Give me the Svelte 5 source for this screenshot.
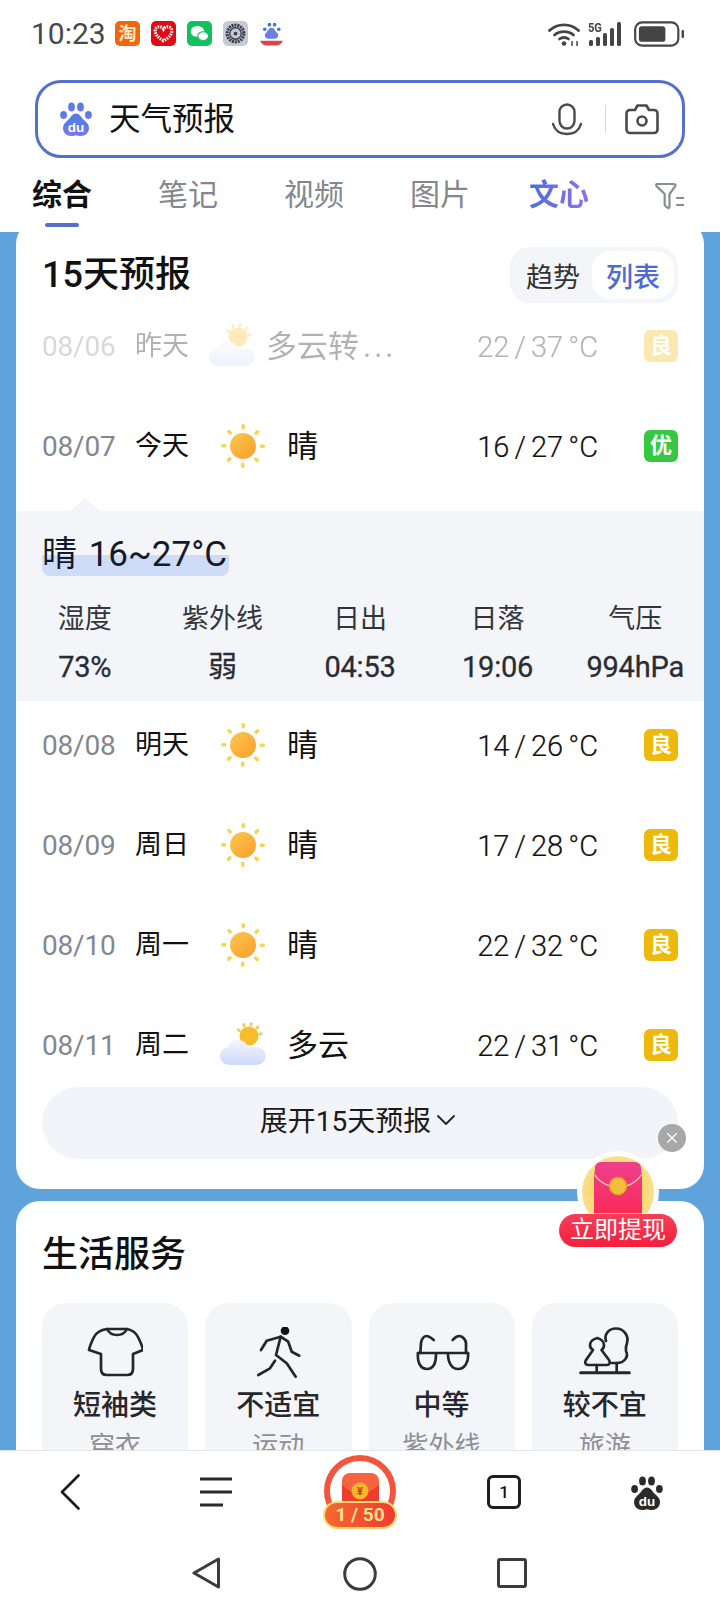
<script>
	const appIcons = ['taobao', 'heart', 'wechat', 'gear', 'du'];
	const tabs = [
		{ label: '综合', active: true },
		{ label: '笔记' },
		{ label: '视频' },
		{ label: '图片' },
		{ label: '文心', ai: true }
	];
	const topRows = [
		{ date: '08/06', day: '昨天', icon: 'cloud', text: '多云转', temp: '22 / 37', aq: '良', past: true },
		{ date: '08/07', day: '今天', icon: 'sun', text: '晴', temp: '16 / 27', aq: '优', good: true }
	];
	const restRows = [
		{ date: '08/08', day: '明天', icon: 'sun', text: '晴', temp: '14 / 26', aq: '良' },
		{ date: '08/09', day: '周日', icon: 'sun', text: '晴', temp: '17 / 28', aq: '良' },
		{ date: '08/10', day: '周一', icon: 'sun', text: '晴', temp: '22 / 32', aq: '良' },
		{ date: '08/11', day: '周二', icon: 'cloud', text: '多云', temp: '22 / 31', aq: '良' }
	];
	const stats = [
		{ label: '湿度', value: '73%' },
		{ label: '紫外线', value: '弱' },
		{ label: '日出', value: '04:53' },
		{ label: '日落', value: '19:06' },
		{ label: '气压', value: '994hPa' }
	];
	const services = [
		{ icon: 'shirt', value: '短袖类', label: '穿衣' },
		{ icon: 'walk', value: '不适宜', label: '运动' },
		{ icon: 'glasses', value: '中等', label: '紫外线' },
		{ icon: 'tree', value: '较不宜', label: '旅游' }
	];
	const rays = [0, 45, 90, 135, 180, 225, 270, 315];
</script>

{#snippet paw(fill, inner)}
	<svg class="paw" viewBox="0 0 32 34">
		<defs>
			<linearGradient id="pawfill" x1="0" y1="0" x2="0" y2="1">
				<stop offset="0" stop-color="#4f7fe6" />
				<stop offset="0.55" stop-color="#5c7be8" />
				<stop offset="1" stop-color="#8272ea" />
			</linearGradient>
		</defs>
		<ellipse cx="3.6" cy="13" rx="3.4" ry="4" fill={fill} />
		<ellipse cx="11.5" cy="5" rx="3.4" ry="4.6" fill={fill} />
		<ellipse cx="20.5" cy="5" rx="3.4" ry="4.6" fill={fill} />
		<ellipse cx="28.4" cy="13" rx="3.4" ry="4" fill={fill} />
		<path d="M16 11.500c4 0 5 4 8 6.500 3 2.500 5 5 5 8 0 5-4 8-8 8-2 0-4-.8-5-.8s-3 .8-5 .8c-4 0-8-3-8-8 0-3 2-5.500 5-8 3-2.500 4-6.500 8-6.500z" fill={fill} />
		<text x="16" y="29.500" text-anchor="middle" font-size="13.500" font-weight="700" fill={inner}>du</text>
	</svg>
{/snippet}

{#snippet weather(kind)}
	<svg class="weather" viewBox="0 0 46 46">
		<defs>
			<linearGradient id="sunfill" x1="0" y1="0" x2="1" y2="1">
				<stop offset="0" stop-color="#fbc94f" />
				<stop offset="1" stop-color="#fb9c2c" />
			</linearGradient>
			<linearGradient id="cloudfill" x1="0" y1="0" x2="0" y2="1">
				<stop offset="0" stop-color="#f3f4fb" />
				<stop offset="1" stop-color="#c9d5fb" />
			</linearGradient>
		</defs>
		{#if kind === 'sun'}
			{#each rays as r}
				<rect x="21.500" y="1" width="3.500" height="5.500" rx="1.700" fill="#f5d64e" transform="rotate({r} 23 23)" />
			{/each}
			<circle cx="23" cy="23" r="13" fill="url(#sunfill)" />
		{:else}
			{#each [-60, -25, 10, 45, 80] as r}
				<rect x="27.500" y="0" width="3" height="4.500" rx="1.500" fill="#f0d05a" transform="rotate({r} 29 14)" />
			{/each}
			<circle cx="29" cy="14" r="9.500" fill="#f9bd2b" />
			<path d="M10 43C4 43 0 39 0 34c0-5 3.500-8.500 8-9 2-5 7-8 12-7 4 .7 7 3.500 8.500 7.500 1-.3 2-.5 3.500-.5h4c5.500 0 9.500 3.500 9.500 9s-4 9-9.500 9z" fill="url(#cloudfill)" opacity="0.92" />
		{/if}
	</svg>
{/snippet}

{#snippet row(r)}
	<div class="row" class:past={r.past}>
		<span class="date">{r.date}</span>
		<span class="day">{r.day}</span>
		{@render weather(r.icon)}
		<span class="desc">{r.text}{#if r.past}<b class="dots">...</b>{/if}</span>
		<span class="temp">{r.temp}<i>°C</i></span>
		<span class="aq" class:good={r.good}>{r.aq}</span>
	</div>
{/snippet}

<div class="page">
	<header class="top">
		<div class="status">
			<span class="clock">10:23</span>
			<div class="apps">
				{#each appIcons as a}
					<span class="app {a}">
						{#if a === 'taobao'}
							淘
						{:else if a === 'heart'}
							<svg viewBox="0 0 24 24"><path d="M12 19C6 15.500 4 12.500 4 9.500 4 7 6 5.500 8 5.500c1.700 0 3.200.8 4 2.200.8-1.400 2.300-2.200 4-2.200 2 0 4 1.500 4 4 0 3-2 6-8 9.500z" fill="none" stroke="#fff" stroke-width="3" stroke-dasharray="1.500 1" /></svg>
						{:else if a === 'wechat'}
							<svg viewBox="0 0 24 24"><ellipse cx="10" cy="10" rx="6.500" ry="5.200" fill="#fff" /><ellipse cx="15.500" cy="14.500" rx="5.200" ry="4.200" fill="#fff" stroke="#11c15e" /></svg>
						{:else if a === 'gear'}
							<svg viewBox="0 0 24 24"><circle cx="12" cy="12" r="8" fill="none" stroke="#3c3f4a" stroke-width="3" stroke-dasharray="2 .8" /><circle cx="12" cy="12" r="5.500" fill="none" stroke="#3c3f4a" stroke-width="1.300" /><circle cx="12" cy="12" r="1.800" fill="#3c3f4a" /></svg>
						{:else}
							<svg viewBox="0 0 24 24">
								<circle cx="5.500" cy="8" r="1.700" fill="#3f78d8" /><circle cx="10" cy="3.500" r="1.800" fill="#3f78d8" /><circle cx="15" cy="3.500" r="1.800" fill="#3f78d8" /><circle cx="19" cy="8" r="1.700" fill="#3f78d8" />
								<path d="M12 6.500c3 0 3 3 5 4.500 2.500 2 1.500 6-2 6H9c-3.500 0-4.500-4-2-6 2-1.500 2-4.500 5-4.500z" fill="#6a7fe6" />
								<path d="M1 19h22c-1.500 3-3.500 4.500-6 4.500H7C4.500 23.500 2.500 22 1 19z" fill="#d8474a" />
							</svg>
						{/if}
					</span>
				{/each}
			</div>
			<div class="indicators">
				<svg class="wifi" viewBox="0 0 32 24" fill="none" stroke="#444" stroke-width="2.800" stroke-linecap="round">
					<path d="M1.500 8.500C9.500 1 22.500 1 30.500 8.500" />
					<path d="M6.500 13c5-4.500 14-4.500 19 0" />
					<path d="M11.500 17c2.500-2 6.500-2 9 0" />
					<circle cx="16" cy="21.500" r="2.300" fill="#444" stroke="none" />
					<path d="M24 19.500v4M29 19.500v4" stroke-width="1.500" />
				</svg>
				<div class="cell">
					<span class="five">5G</span>
					<svg viewBox="0 0 35 24" fill="#444">
						<rect x="0" y="18" width="4" height="6" rx="1.500" />
						<rect x="7" y="15" width="4" height="9" rx="1.500" />
						<rect x="14" y="11" width="4" height="13" rx="1.500" />
						<rect x="21" y="6" width="4" height="18" rx="1.500" />
						<rect x="28" y="0" width="4" height="24" rx="1.500" />
					</svg>
				</div>
				<svg class="battery" viewBox="0 0 52 26">
					<rect x="1.200" y="1.200" width="44" height="23.600" rx="7" fill="none" stroke="#444" stroke-width="2.200" />
					<rect x="5" y="5" width="27" height="16" rx="3" fill="#444" />
					<rect x="48.500" y="9" width="2.500" height="8" rx="1" fill="#444" />
				</svg>
			</div>
		</div>

		<div class="search">
			{@render paw('url(#pawfill)', '#fff')}
			<span class="query">天气预报</span>
			<div class="search-tools">
				<svg class="mic" viewBox="0 0 30 33" fill="none" stroke="#4a4a4a" stroke-width="2.400" stroke-linecap="round">
					<rect x="7.500" y="1.500" width="15" height="24" rx="7.500" />
					<path d="M1 21c2 6.500 7.500 10 14 10s12-3.500 14-10" />
				</svg>
				<span class="divider"></span>
				<svg class="camera" viewBox="0 0 34 31" fill="none" stroke="#4a4a4a" stroke-width="2.600" stroke-linejoin="round">
					<path d="M5 6h5l2.500-4.500h9L24 6h5c2 0 3.500 1.500 3.500 3.500v16c0 2-1.500 3.500-3.500 3.500H5c-2 0-3.500-1.500-3.500-3.500v-16C1.500 7.500 3 6 5 6z" />
					<circle cx="17" cy="17" r="4.500" />
				</svg>
			</div>
		</div>

		<nav class="tabs">
			{#each tabs as t}
				<div class="tab" class:active={t.active} class:ai={t.ai}>
					<span>{t.label}</span>
					<i></i>
				</div>
			{/each}
			<svg class="filter" viewBox="0 0 32 28" fill="none" stroke="#888b92" stroke-width="2.200" stroke-linejoin="round" stroke-linecap="round">
				<path d="M2 2h17c1.500 0 2 1.500 1 2.600L14.500 12v12.500c0 1.500-1 2-2 1.200l-2-1.700c-.6-.5-.8-1-.8-1.800V12L2 4.600C1 3.500.8 2 2 2z" />
				<path d="M22 16h10M22 23h10" />
			</svg>
		</nav>
	</header>

	<main class="scroll">
		<section class="card forecast">
			<div class="card-head">
				<h2>15天预报</h2>
				<div class="toggle">
					<span>趋势</span>
					<span class="on">列表</span>
				</div>
			</div>

			<div class="rows">
				{#each topRows as r}
					{@render row(r)}
				{/each}
			</div>

			<div class="today">
				<span class="notch"></span>
				<div class="today-title"><span>晴 16~27°C</span></div>
				<div class="stats">
					{#each stats as s}
						<div class="stat">
							<span class="stat-label">{s.label}</span>
							<span class="stat-value">{s.value}</span>
						</div>
					{/each}
				</div>
			</div>

			<div class="rows">
				{#each restRows as r}
					{@render row(r)}
				{/each}
			</div>

			<button class="expand">
				展开15天预报
				<svg viewBox="0 0 20 12" fill="none" stroke="#222" stroke-width="1.800" stroke-linecap="round" stroke-linejoin="round"><path d="M2 2l8 8 8-8" /></svg>
			</button>
		</section>

		<section class="card life">
			<h2>生活服务</h2>
			<div class="tiles">
				{#each services as s}
					<div class="tile">
						<svg class="tile-icon" viewBox="0 0 56 52" fill="none" stroke="#26262a" stroke-width="2.700" stroke-linecap="round" stroke-linejoin="round">
							{#if s.icon === 'shirt'}
								<path d="M20 2C13 3 9 6 7 10 5 14 3 18 2 23l12 4v15c0 4 2 6 6 6h20c4 0 6-2 6-6V27l10-4c-1-5-3-9-5-13-2-4-6-7-11-8-2 4-6 6-10 6s-8-2-10-6z" />
								<path d="M20 2h20" />
							{:else if s.icon === 'walk'}
								<circle cx="35" cy="3.700" r="4.300" fill="#111" stroke="none" />
								<path d="M11 23l5.700-9.300 14-4 7.500 5 3.500 10 7.600 4" />
								<path d="M30.700 9.700L26 28l10.700 8.300 9 13.400" />
								<path d="M25 33.700l-5 7.600-11.700 6.700" />
							{:else if s.icon === 'glasses'}
								<path d="M4 26h50" />
								<path d="M4 26c-1 10 3 16 9 16s9-6 9-15" />
								<path d="M34 27c0 9 4 15 10 15s11-6 10-16" />
								<path d="M6.300 26L7 16c.5-4 3-7 5-7 3 0 5 1.500 7.700 4" />
								<path d="M52 26l0-10c-.5-4-4-7-6.700-7-3 0-4.500 1.500-6.600 4" />
							{:else}
								<path d="M3.700 45.700h48.600" stroke-width="3" />
								<path d="M20.300 11c3.700 1 6.700 4 6.700 7 0 2-1 4-2.500 5l7.500 10c2 3 0 5-2 5H11c-2 0-4-2-2-5l7-10c-2-1-3-3-3-5 0-3 3-6 7.300-7z" />
								<path d="M19.700 38v7.700M39.700 36v9.700" />
								<path d="M29 14c-2-6 2-12.500 10-12.500S52 9 50 16c-1.500 4-1.500 5-1 8 3 6-2 12-9 12h-5" />
							{/if}
						</svg>
						<span class="tile-value">{s.value}</span>
						<span class="tile-label">{s.label}</span>
					</div>
				{/each}
			</div>
		</section>

		<span class="float-close">
			<svg viewBox="0 0 14 14" stroke="#fff" stroke-width="1.500" stroke-linecap="round"><path d="M2 2l10 10M12 2L2 12" /></svg>
		</span>
		<div class="float-packet">
			<div class="packet-disc">
				<svg viewBox="0 0 52 60">
					<defs>
						<linearGradient id="envfill" x1="0" y1="0" x2="0" y2="1">
							<stop offset="0" stop-color="#ee3f8d" />
							<stop offset="1" stop-color="#fb2750" />
						</linearGradient>
					</defs>
					<path d="M3 6C3 2 6 0 10 0h32c4 0 7 2 7 6l1 10v44H2V16z" fill="url(#envfill)" />
					<path d="M3 13c4 7 13 12 23 12s19-5 23-12" fill="none" stroke="#f9c9a0" stroke-width="1.500" />
					<circle cx="26" cy="24" r="8.500" fill="#f4bf3f" stroke="#e8a429" stroke-width="1.500" />
				</svg>
			</div>
			<span class="packet-label">立即提现</span>
		</div>
	</main>

	<footer class="bottom">
		<div class="toolbar">
			<svg class="tool-back" viewBox="0 0 20 36" fill="none" stroke="#1a1a1a" stroke-width="2.600" stroke-linecap="round" stroke-linejoin="round"><path d="M18.500 1.500L2 18l16.500 16.500" /></svg>
			<svg class="tool-menu" viewBox="0 0 32 30" stroke="#2a2a2a" stroke-width="3"><path d="M0 2h32M0 15h32M0 28h23" /></svg>
			<div class="reward">
				<svg viewBox="0 0 74 76">
					<circle cx="37" cy="36" r="33" fill="none" stroke="#f2543c" stroke-width="6" />
					<rect x="19" y="18" width="37" height="40" rx="8" fill="#f7623f" />
					<path d="M19 30c6 5 12 9 18.500 9S50 35 56 30v26H19z" fill="#ef3d2b" />
					<circle cx="37" cy="36" r="8.500" fill="#f8b62d" />
					<text x="37" y="40" text-anchor="middle" font-size="11" font-weight="700" fill="#c23a1a">¥</text>
				</svg>
				<span class="reward-count">1 / 50</span>
			</div>
			<span class="tool-tabs">1</span>
			<span class="tool-paw">{@render paw('#2a2a2a', '#fff')}</span>
		</div>
		<div class="navbar">
			<svg class="nav-back" viewBox="0 0 28 32" fill="none" stroke="#3b3b3b" stroke-width="3" stroke-linejoin="round"><path d="M26.500 2v28L2 16z" /></svg>
			<svg class="nav-home" viewBox="0 0 34 34" fill="none" stroke="#3b3b3b" stroke-width="3"><circle cx="17" cy="17" r="15.300" /></svg>
			<svg class="nav-recent" viewBox="0 0 30 30" fill="none" stroke="#3b3b3b" stroke-width="3" stroke-linejoin="round"><rect x="1.500" y="1.500" width="27" height="27" rx="1.500" /></svg>
		</div>
	</footer>
</div>

<style>
	:global(body) {
		margin: 0;
		background: #fff;
	}
	.page {
		position: relative;
		display: flex;
		flex-direction: column;
		width: 720px;
		height: 1612px;
		overflow: hidden;
		background: #5fa3dd;
		color: #111;
		font-family: Roboto, 'Noto Sans CJK SC', sans-serif;
	}
	.top {
		position: relative;
		z-index: 2;
		height: 232px;
		flex: none;
		background: #fff;
	}
	.status {
		display: flex;
		align-items: center;
		height: 80px;
		padding: 0 35px 13px 31px;
		box-sizing: border-box;
	}
	.clock {
		width: 84px;
		font-size: 30px;
		color: #484848;
	}
	.apps {
		display: flex;
		gap: 11px;
	}
	.app {
		display: flex;
		align-items: center;
		justify-content: center;
		width: 25px;
		height: 25px;
		border-radius: 5px;
		overflow: hidden;
		font-size: 18px;
		line-height: 1;
		font-weight: 700;
		color: #ffe9c7;
	}
	.app svg {
		width: 100%;
		height: 100%;
	}
	.taobao {
		background: #f4640c;
	}
	.heart {
		background: #e00a17;
	}
	.wechat {
		background: #11c15e;
	}
	.gear {
		background: #c5c9d8;
	}
	.indicators {
		display: flex;
		align-items: center;
		margin-left: auto;
	}
	.wifi {
		width: 32px;
		height: 24px;
	}
	.cell {
		position: relative;
		width: 35px;
		height: 24px;
		margin: 0 10px 0 9px;
	}
	.cell svg {
		display: block;
		width: 100%;
		height: 100%;
	}
	.five {
		position: absolute;
		left: -1px;
		top: -1px;
		font-size: 13px;
		line-height: 13px;
		font-weight: 700;
		color: #444;
		transform: scaleX(0.85);
		transform-origin: left;
	}
	.battery {
		width: 51px;
		height: 26px;
	}
	.search {
		display: flex;
		align-items: center;
		height: 78px;
		margin: 0 35px;
		padding: 0 23px 0 22px;
		box-sizing: border-box;
		border: 3px solid #5470c9;
		border-radius: 26px;
	}
	.paw {
		display: block;
		width: 32px;
		height: 34px;
		font-family: 'Liberation Sans', sans-serif;
	}
	.query {
		margin-left: 17px;
		padding-top: 2px;
		font-size: 31.5px;
		line-height: 40px;
	}
	.search-tools {
		display: flex;
		align-items: center;
		margin-left: auto;
	}
	.mic {
		width: 30px;
		height: 33px;
	}
	.divider {
		width: 1px;
		height: 28px;
		margin: 0 19px 0 23px;
		background: #d9d9d9;
	}
	.camera {
		width: 34px;
		height: 31px;
	}
	.tabs {
		display: flex;
		align-items: flex-start;
		gap: 66px;
		padding: 17px 0 0 32px;
	}
	.tab {
		display: flex;
		flex-direction: column;
		align-items: center;
		font-size: 30px;
		line-height: 40px;
		color: #85878e;
	}
	.tab i {
		width: 34px;
		height: 4px;
		margin-top: 8px;
		border-radius: 2px;
	}
	.tab.active {
		color: #111;
		font-weight: 700;
	}
	.tab.active i {
		background: #5470c9;
	}
	.tab.ai {
		margin-left: -7px;
		font-weight: 700;
	}
	.tab.ai span {
		background: linear-gradient(90deg, #4a6ee0, #8f72ea);
		-webkit-background-clip: text;
		background-clip: text;
		color: transparent;
	}
	.filter {
		position: absolute;
		left: 655px;
		top: 182px;
		width: 32px;
		height: 28px;
		clip-path: inset(0 3px 0 0);
	}
	.scroll {
		position: relative;
		flex: 1;
		min-height: 0;
		overflow: hidden;
		padding: 0 16px;
	}
	.card {
		background: #fff;
		border-radius: 24px;
		padding: 0 26px;
	}
	.forecast {
		margin-top: -12px;
		padding-top: 27px;
		padding-bottom: 30px;
	}
	.card-head {
		display: flex;
		align-items: center;
		justify-content: space-between;
		margin-bottom: 1px;
	}
	h2 {
		margin: 0;
		font-size: 36px;
		line-height: 46px;
		font-weight: 500;
	}
	.toggle {
		display: flex;
		align-items: center;
		height: 56px;
		padding: 0 4px 0 16px;
		box-sizing: border-box;
		border-radius: 20px;
		background: #f3f5f9;
		font-size: 27px;
		color: #333;
		gap: 12px;
	}
	.toggle .on {
		display: flex;
		align-items: center;
		justify-content: center;
		width: 82px;
		height: 48px;
		border-radius: 18px;
		background: #fff;
		color: #4d6bd3;
		font-weight: 500;
	}
	.rows {
		display: flex;
		flex-direction: column;
		gap: 16px;
	}
	.row {
		display: flex;
		align-items: center;
		height: 84px;
		font-size: 27px;
	}
	.row.past {
		opacity: 0.32;
	}
	.date {
		width: 93px;
		flex: none;
		font-size: 28px;
		letter-spacing: -0.2px;
		color: #85878e;
	}
	.day {
		width: 74px;
		flex: none;
		margin-bottom: 6px;
	}
	.weather {
		display: block;
		width: 46px;
		height: 46px;
		flex: none;
		margin-left: 11px;
	}
	.past .weather {
		margin-left: 0;
	}
	.desc {
		margin-left: 21px;
		margin-bottom: 6px;
		font-size: 31px;
	}
	.past .desc {
		margin-left: 11px;
	}
	.dots {
		margin-left: 4px;
		font-weight: 400;
		letter-spacing: 3px;
	}
	.temp {
		margin-left: auto;
		margin-right: 46px;
		padding-top: 1px;
		font-size: 29px;
		font-weight: 300;
		word-spacing: -2px;
		-webkit-text-stroke: 0.2px currentColor;
	}
	.temp i {
		margin-left: 5px;
		font-style: normal;
	}
	.aq {
		display: flex;
		align-items: center;
		justify-content: center;
		width: 34px;
		height: 32px;
		border-radius: 6px;
		background: #edb90c;
		color: #fff;
		font-size: 22px;
		font-weight: 700;
		line-height: 1;
	}
	.aq.good {
		background: #36c93f;
	}
	.today {
		position: relative;
		margin: 23px -26px 2px;
		height: 190px;
		box-sizing: border-box;
		padding: 23px 0 0;
		background: #f4f5f9;
	}
	.notch {
		position: absolute;
		left: 54px;
		top: -13px;
		width: 0;
		height: 0;
		border-left: 15px solid transparent;
		border-right: 15px solid transparent;
		border-bottom: 13px solid #f4f5f9;
	}
	.today-title {
		margin-left: 26px;
		font-size: 35px;
		line-height: 42px;
		word-spacing: 3px;
		color: #15192b;
	}
	.today-title span {
		display: inline-block;
		padding-right: 2px;
		background: linear-gradient(#0000 0 50%, #cfdcf7 50%);
		border-radius: 0 0 8px 8px;
	}
	.stats {
		display: grid;
		grid-template-columns: repeat(5, 1fr);
		margin-top: 24px;
	}
	.stat {
		display: flex;
		flex-direction: column;
		align-items: center;
		color: #2a2c33;
	}
	.stat-label {
		font-size: 27px;
		line-height: 38px;
		color: #33353c;
	}
	.stat-value {
		margin-top: 10px;
		font-size: 29px;
		line-height: 38px;
		letter-spacing: -0.2px;
		-webkit-text-stroke: 0.3px currentColor;
	}
	.expand {
		display: flex;
		align-items: center;
		justify-content: center;
		gap: 5px;
		width: 100%;
		height: 72px;
		padding: 0 4px 9px 0;
		border: 0;
		border-radius: 36px;
		background: #f3f4f9;
		color: #1a1a1a;
		font: inherit;
		font-size: 28px;
	}
	.expand svg {
		width: 20px;
		height: 12px;
		margin-top: 3px;
	}
	.life {
		margin-top: 12px;
		padding-top: 31px;
	}
	.tiles {
		display: grid;
		grid-template-columns: repeat(4, 1fr);
		gap: 17px;
		margin-top: 25px;
	}
	.tile {
		display: flex;
		flex-direction: column;
		align-items: center;
		padding-top: 24px;
		height: 200px;
		box-sizing: border-box;
		border-radius: 24px;
		background: #f4f5f9;
	}
	.tile-icon {
		width: 56px;
		height: 52px;
	}
	.tile-value {
		margin-top: 9px;
		font-size: 28px;
		line-height: 36px;
		font-weight: 500;
		color: #26272c;
	}
	.tile-label {
		margin-top: 4px;
		font-size: 26px;
		line-height: 36px;
		color: #8d8f96;
	}
	.float-close {
		position: absolute;
		left: 658px;
		top: 892px;
		display: flex;
		align-items: center;
		justify-content: center;
		width: 28px;
		height: 28px;
		border-radius: 50%;
		background: #a8a8a8;
	}
	.float-close svg {
		width: 12px;
		height: 12px;
	}
	.float-packet {
		position: absolute;
		left: 559px;
		top: 919px;
		width: 118px;
		height: 96px;
	}
	.packet-disc {
		position: absolute;
		left: 18px;
		top: 0;
		width: 82px;
		height: 82px;
		box-sizing: border-box;
		border: 5px solid #fff;
		border-radius: 50%;
		background: radial-gradient(circle, #f8d468 40%, #fcecb0 100%);
		overflow: hidden;
		display: flex;
		justify-content: center;
		padding-top: 6px;
	}
	.packet-disc svg {
		flex: none;
		width: 52px;
		height: 60px;
	}
	.packet-label {
		position: absolute;
		left: 0;
		bottom: 0;
		width: 118px;
		height: 33px;
		border-radius: 17px;
		background: linear-gradient(#f73f56, #f41f3c);
		box-shadow: 0 0 0 1px #ffffff88;
		color: #fff;
		font-size: 24px;
		line-height: 33px;
		text-align: center;
		white-space: nowrap;
	}
	.bottom {
		position: relative;
		z-index: 2;
		flex: none;
		height: 162px;
		box-sizing: border-box;
		background: #fff;
		border-top: 1px solid #e4e6ea;
	}
	.toolbar {
		position: relative;
		height: 101px;
	}
	.toolbar > * {
		position: absolute;
	}
	.tool-back {
		left: 60px;
		top: 23px;
		width: 20px;
		height: 36px;
	}
	.tool-menu {
		left: 200px;
		top: 26px;
		width: 32px;
		height: 30px;
	}
	.reward {
		left: 323px;
		top: 4px;
		width: 74px;
		height: 76px;
	}
	.reward svg {
		display: block;
		width: 74px;
		height: 76px;
	}
	.reward-count {
		position: absolute;
		left: 0;
		bottom: 2px;
		width: 74px;
		height: 28px;
		box-sizing: border-box;
		border: 2px solid #fcdc6a;
		border-radius: 14px;
		background: linear-gradient(90deg, #f5692f, #f03a32);
		color: #fde28c;
		font-size: 19px;
		line-height: 24px;
		font-weight: 700;
		text-align: center;
	}
	.tool-tabs {
		left: 487px;
		top: 24px;
		width: 34px;
		height: 34px;
		box-sizing: border-box;
		border: 3px solid #1e1e1e;
		border-radius: 6px;
		font-size: 17px;
		line-height: 28px;
		font-weight: 500;
		text-align: center;
	}
	.tool-paw {
		left: 631px;
		top: 25px;
	}
	.navbar {
		position: relative;
		height: 60px;
	}
	.navbar > * {
		position: absolute;
	}
	.nav-back {
		left: 192px;
		top: 5px;
		width: 28px;
		height: 32px;
	}
	.nav-home {
		left: 343px;
		top: 5px;
		width: 34px;
		height: 34px;
	}
	.nav-recent {
		left: 497px;
		top: 6px;
		width: 30px;
		height: 30px;
	}
</style>
